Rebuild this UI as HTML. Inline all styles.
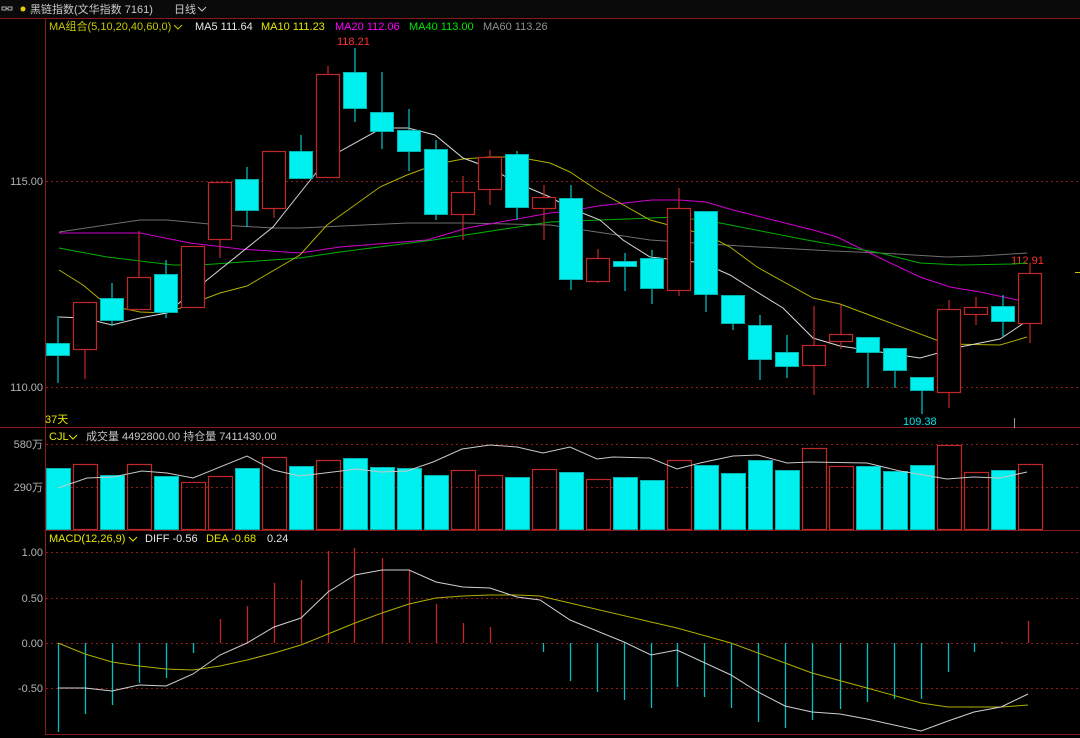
<!DOCTYPE html><html><head><meta charset="utf-8"><style>
html,body{margin:0;padding:0;background:#000;width:1080px;height:738px;overflow:hidden}
text{font-family:"Liberation Sans","Noto Sans CJK SC",sans-serif;font-size:11px}
</style></head><body>
<svg width="1080" height="738" xmlns="http://www.w3.org/2000/svg">
<rect width="1080" height="738" fill="#000"/>
<rect width="1080" height="18" fill="#0a0a0a"/>
<!-- header -->
<rect x="2" y="7" width="4" height="3" fill="none" stroke="#aaa" stroke-width="1"/><rect x="8" y="7" width="4" height="3" fill="none" stroke="#aaa" stroke-width="1"/><line x1="6" y1="8.5" x2="8" y2="8.5" stroke="#aaa"/>
<circle cx="23" cy="9" r="2.5" fill="#e8d000"/>
<text x="30" y="13" fill="#c8c8c8" font-size="12">黑链指数(文华指数  7161)</text>
<text x="174" y="13" fill="#c8c8c8" font-size="12">日线</text>
<path d="M198 7 L202 11 L206 7" stroke="#c8c8c8" fill="none"/>
<line x1="0" y1="18.5" x2="1080" y2="18.5" stroke="#8c1a1a"/>
<line x1="45.5" y1="18" x2="45.5" y2="734" stroke="#8c1a1a"/>
<line x1="0" y1="427.5" x2="1080" y2="427.5" stroke="#8c1a1a"/>
<line x1="45" y1="530.5" x2="1080" y2="530.5" stroke="#8c1a1a"/>
<line x1="45" y1="734.5" x2="1080" y2="734.5" stroke="#8c1a1a"/>
<g stroke="#8c1a1a" stroke-dasharray="2,3">
<line x1="46" y1="181.5" x2="1080" y2="181.5"/><line x1="46" y1="387.5" x2="1080" y2="387.5"/>
<line x1="46" y1="444.5" x2="1080" y2="444.5"/><line x1="46" y1="487.5" x2="1080" y2="487.5"/>
<line x1="46" y1="552.5" x2="1080" y2="552.5"/><line x1="46" y1="598.5" x2="1080" y2="598.5"/><line x1="46" y1="643.5" x2="1080" y2="643.5"/><line x1="46" y1="688.5" x2="1080" y2="688.5"/>
</g>
<g fill="#b4b4b4" text-anchor="end">
<text x="43" y="185">115.00</text><text x="43" y="391">110.00</text>
<text x="43" y="448">580万</text><text x="43" y="491">290万</text>
<text x="43" y="556">1.00</text><text x="43" y="602">0.50</text><text x="43" y="647">0.00</text><text x="43" y="692">-0.50</text>
</g>
<text x="49" y="30" fill="#c8c800">MA组合(5,10,20,40,60,0)</text><path d="M174 25 L178 29 L182 25" stroke="#c8c800" fill="none"/>
<text x="195" y="30" fill="#e6e6e6">MA5 111.64</text>
<text x="261" y="30" fill="#e6e600">MA10 111.23</text>
<text x="335" y="30" fill="#ff00ff">MA20 112.06</text>
<text x="409" y="30" fill="#00e600">MA40 113.00</text>
<text x="483" y="30" fill="#909090">MA60 113.26</text>
<text x="337" y="45" fill="#ff3030">118.21</text>
<text x="1011" y="264" fill="#ff3030">112.91</text>
<text x="903" y="425" fill="#00e6e6">109.38</text>
<text x="45" y="423" fill="#e6e600">37天</text>
<text x="49" y="440" fill="#e6e600">CJL</text><path d="M69 435 L73 439 L77 435" stroke="#e6e600" fill="none"/>
<text x="86" y="440" fill="#c8c8c8">成交量 4492800.00  持仓量 7411430.00</text>
<text x="49" y="542" fill="#e6e600">MACD(12,26,9)</text><path d="M129 537 L133 541 L137 537" stroke="#e6e600" fill="none"/>
<text x="145" y="542" fill="#e6e6e6">DIFF -0.56</text>
<text x="206" y="542" fill="#e6e600">DEA -0.68</text>
<text x="267" y="542" fill="#e6e6e6">0.24</text>
<line x1="1014.5" y1="418" x2="1014.5" y2="428" stroke="#999"/>
<line x1="1075" y1="272.5" x2="1080" y2="272.5" stroke="#c8c800"/>
<!-- MA lines -->
<g fill="none" stroke-width="1">
<polyline stroke="#707070" points="59,232 140,220 167,220 220,225 273,228 300,228 407,223 467,223 550,225 650,240 740,246 833,251 880,253 947,257 980,256 1027,253"/>
<polyline stroke="#d000d0" points="59,233 140,233 190,243 240,249 300,253 340,247 427,240 467,228 550,213 571,211 598,206 652,200 679,200 706,202 733,210 813,230 837,237 880,258 920,277 950,287 980,292 1027,302"/>
<polyline stroke="#00b000" points="59,248 107,257 173,265 200,265 300,258 340,252 433,240 550,222 677,217 720,223 807,240 880,253 920,263 960,265 1013,264 1027,263"/>
<polyline stroke="#b0b000" points="59,270 83,285 107,305 140,312 167,313 220,293 247,286 300,255 327,225 380,187 407,175 437,164 463,159 490,157 517,157 550,163 570,172 597,190 650,220 680,228 707,235 730,247 757,267 813,298 840,304 880,319 947,344 1000,345 1027,337"/>
<polyline stroke="#d8d8d8" points="59,317 83,318 112,325 140,318 167,313 207,280 273,227 300,193 328,158 382,128 408,128 435,135 463,158 490,168 517,183 550,197 570,208 600,220 623,240 650,257 703,263 730,275 757,292 783,308 813,338 840,346 880,352 920,358 960,347 1000,339 1027,321"/>
</g>
<!-- candles -->
<g stroke="#00c8c8" stroke-width="1.2">
<line x1="58" y1="316" x2="58" y2="383"/><line x1="112" y1="283" x2="112" y2="326"/><line x1="166" y1="260" x2="166" y2="318"/><line x1="247" y1="167" x2="247" y2="227"/><line x1="301" y1="135" x2="301" y2="178"/><line x1="355" y1="48" x2="355" y2="122"/><line x1="382" y1="72" x2="382" y2="149"/><line x1="409" y1="109" x2="409" y2="171"/><line x1="436" y1="140" x2="436" y2="220"/><line x1="517" y1="151" x2="517" y2="220"/><line x1="571" y1="185" x2="571" y2="290"/><line x1="625" y1="253" x2="625" y2="291"/><line x1="652" y1="250" x2="652" y2="304"/><line x1="706" y1="211" x2="706" y2="312"/><line x1="733" y1="295" x2="733" y2="330"/><line x1="760" y1="315" x2="760" y2="380"/><line x1="787" y1="335" x2="787" y2="378"/><line x1="868" y1="337" x2="868" y2="388"/><line x1="895" y1="348" x2="895" y2="388"/><line x1="922" y1="377" x2="922" y2="414"/><line x1="1003" y1="295" x2="1003" y2="337"/>
</g>
<g fill="#00f0f0" stroke="#00b4b4">
<rect x="46.5" y="343.5" width="23" height="12"/><rect x="100.5" y="298.5" width="23" height="22"/><rect x="154.5" y="274.5" width="23" height="38"/><rect x="235.5" y="179.5" width="23" height="31"/><rect x="289.5" y="151.5" width="23" height="27"/><rect x="343.5" y="72.5" width="23" height="36"/><rect x="370.5" y="112.5" width="23" height="19"/><rect x="397.5" y="130.5" width="23" height="21"/><rect x="424.5" y="149.5" width="23" height="65"/><rect x="505.5" y="154.5" width="23" height="53"/><rect x="559.5" y="198.5" width="23" height="81"/><rect x="613.5" y="261.5" width="23" height="5"/><rect x="640.5" y="258.5" width="23" height="30"/><rect x="694.5" y="211.5" width="23" height="83"/><rect x="721.5" y="295.5" width="23" height="28"/><rect x="748.5" y="325.5" width="23" height="34"/><rect x="775.5" y="352.5" width="23" height="14"/><rect x="856.5" y="337.5" width="23" height="15"/><rect x="883.5" y="348.5" width="23" height="22"/><rect x="910.5" y="377.5" width="23" height="13"/><rect x="991.5" y="306.5" width="23" height="15"/>
</g>
<g stroke="#c02828" stroke-width="1.2">
<line x1="85" y1="302" x2="85" y2="379"/><line x1="139" y1="231" x2="139" y2="309"/><line x1="193" y1="246" x2="193" y2="307"/><line x1="220" y1="182" x2="220" y2="258"/><line x1="274" y1="151" x2="274" y2="218"/><line x1="328" y1="66" x2="328" y2="177"/><line x1="463" y1="176" x2="463" y2="240"/><line x1="490" y1="150" x2="490" y2="205"/><line x1="544" y1="185" x2="544" y2="240"/><line x1="598" y1="249" x2="598" y2="283"/><line x1="679" y1="188" x2="679" y2="296"/><line x1="814" y1="306" x2="814" y2="395"/><line x1="841" y1="305" x2="841" y2="349"/><line x1="949" y1="300" x2="949" y2="408"/><line x1="976" y1="297" x2="976" y2="325"/><line x1="1030" y1="263" x2="1030" y2="343"/>
</g>
<g fill="#000" stroke="#c02828" stroke-width="1.2">
<rect x="73.5" y="302.5" width="23" height="47"/><rect x="127.5" y="277.5" width="23" height="32"/><rect x="181.5" y="246.5" width="23" height="61"/><rect x="208.5" y="182.5" width="23" height="57"/><rect x="262.5" y="151.5" width="23" height="57"/><rect x="316.5" y="74.5" width="23" height="103"/><rect x="451.5" y="192.5" width="23" height="22"/><rect x="478.5" y="157.5" width="23" height="32"/><rect x="532.5" y="197.5" width="23" height="11"/><rect x="586.5" y="258.5" width="23" height="23"/><rect x="667.5" y="208.5" width="23" height="82"/><rect x="802.5" y="345.5" width="23" height="20"/><rect x="829.5" y="334.5" width="23" height="7"/><rect x="937.5" y="309.5" width="23" height="83"/><rect x="964.5" y="307.5" width="23" height="7"/><rect x="1018.5" y="273.5" width="23" height="50"/>
</g>
<!-- volume -->
<g fill="#00f0f0" stroke="#00b4b4">
<rect x="46.5" y="468.5" width="24" height="61"/><rect x="100.5" y="475.5" width="24" height="54"/><rect x="154.5" y="476.5" width="24" height="53"/><rect x="235.5" y="468.5" width="24" height="61"/><rect x="289.5" y="466.5" width="24" height="63"/><rect x="343.5" y="458.5" width="24" height="71"/><rect x="370.5" y="467.5" width="24" height="62"/><rect x="397.5" y="468.5" width="24" height="61"/><rect x="424.5" y="475.5" width="24" height="54"/><rect x="505.5" y="477.5" width="24" height="52"/><rect x="559.5" y="472.5" width="24" height="57"/><rect x="613.5" y="477.5" width="24" height="52"/><rect x="640.5" y="480.5" width="24" height="49"/><rect x="694.5" y="465.5" width="24" height="64"/><rect x="721.5" y="473.5" width="24" height="56"/><rect x="748.5" y="460.5" width="24" height="69"/><rect x="775.5" y="470.5" width="24" height="59"/><rect x="856.5" y="466.5" width="24" height="63"/><rect x="883.5" y="471.5" width="24" height="58"/><rect x="910.5" y="465.5" width="24" height="64"/><rect x="991.5" y="470.5" width="24" height="59"/>
</g>
<g fill="none" stroke="#c02828" stroke-width="1.2">
<rect x="73.5" y="464.5" width="24" height="65"/><rect x="127.5" y="464.5" width="24" height="65"/><rect x="181.5" y="482.5" width="24" height="47"/><rect x="208.5" y="476.5" width="24" height="53"/><rect x="262.5" y="457.5" width="24" height="72"/><rect x="316.5" y="460.5" width="24" height="69"/><rect x="451.5" y="470.5" width="24" height="59"/><rect x="478.5" y="475.5" width="24" height="54"/><rect x="532.5" y="469.5" width="24" height="60"/><rect x="586.5" y="479.5" width="24" height="50"/><rect x="667.5" y="460.5" width="24" height="69"/><rect x="802.5" y="448.5" width="24" height="81"/><rect x="829.5" y="466.5" width="24" height="63"/><rect x="937.5" y="445.5" width="24" height="84"/><rect x="964.5" y="472.5" width="24" height="57"/><rect x="1018.5" y="464.5" width="24" height="65"/>
</g>
<polyline fill="none" stroke="#c8c8c8" points="58,488 87,478 113,477 142,471 167,473 193,478 247,456 273,470 300,476 333,472 357,469 380,472 407,471 433,462 462,449 490,445 517,447 543,453 570,447 597,459 613,457 650,458 677,469 700,463 733,456 758,455 787,463 810,462 867,463 900,471 947,479 973,477 1000,478 1027,472"/>
<!-- MACD -->
<g stroke="#00c0c0" stroke-width="1.3">
<line x1="58.5" y1="643" x2="58.5" y2="732"/><line x1="85.5" y1="643" x2="85.5" y2="714"/><line x1="112.5" y1="643" x2="112.5" y2="705"/><line x1="139.5" y1="643" x2="139.5" y2="683"/><line x1="166.5" y1="643" x2="166.5" y2="678"/><line x1="193.5" y1="643" x2="193.5" y2="653"/>
<line x1="543.5" y1="643" x2="543.5" y2="652"/><line x1="570.5" y1="643" x2="570.5" y2="681"/><line x1="597.5" y1="643" x2="597.5" y2="692"/><line x1="624.5" y1="643" x2="624.5" y2="700"/><line x1="651.5" y1="643" x2="651.5" y2="708"/><line x1="677.5" y1="643" x2="677.5" y2="687"/><line x1="704.5" y1="643" x2="704.5" y2="697"/><line x1="731.5" y1="643" x2="731.5" y2="708"/><line x1="758.5" y1="643" x2="758.5" y2="722"/><line x1="785.5" y1="643" x2="785.5" y2="728"/><line x1="812.5" y1="643" x2="812.5" y2="720"/><line x1="840.5" y1="643" x2="840.5" y2="709"/><line x1="867.5" y1="643" x2="867.5" y2="702"/><line x1="894.5" y1="643" x2="894.5" y2="699"/><line x1="921.5" y1="643" x2="921.5" y2="699"/><line x1="948.5" y1="643" x2="948.5" y2="672"/><line x1="974.5" y1="643" x2="974.5" y2="652"/>
</g>
<g stroke="#c02828" stroke-width="1.3">
<line x1="220.5" y1="643" x2="220.5" y2="619"/><line x1="247.5" y1="643" x2="247.5" y2="606"/><line x1="274.5" y1="643" x2="274.5" y2="583"/><line x1="301.5" y1="643" x2="301.5" y2="580"/><line x1="328.5" y1="643" x2="328.5" y2="551"/><line x1="354.5" y1="643" x2="354.5" y2="548"/><line x1="382.5" y1="643" x2="382.5" y2="558"/><line x1="409.5" y1="643" x2="409.5" y2="570"/><line x1="436.5" y1="643" x2="436.5" y2="604"/><line x1="463.5" y1="643" x2="463.5" y2="623"/><line x1="490.5" y1="643" x2="490.5" y2="627"/><line x1="1001.5" y1="643" x2="1001.5" y2="642"/><line x1="1028.5" y1="643" x2="1028.5" y2="621"/>
</g>
<polyline fill="none" stroke="#b0b000" points="58,643 85,654 112,662 139,666 166,669 193,670 220,666 247,660 274,653 301,645 328,634 355,623 382,613 409,604 436,598 463,596 490,595 517,595 540,596 651,622 677,628 731,643 785,663 812,673 867,688 921,703 948,707 1001,707 1028,705"/>
<polyline fill="none" stroke="#d0d0d0" points="58,688 85,688 112,691 139,685 166,686 193,674 220,655 247,643 274,627 301,618 328,592 355,575 382,570 409,570 436,582 463,587 490,588 517,597 540,600 570,620 624,642 651,655 677,650 731,675 758,692 785,706 812,712 840,714 867,719 921,731 948,721 974,712 1001,707 1028,694"/>
</svg>
</body></html>
